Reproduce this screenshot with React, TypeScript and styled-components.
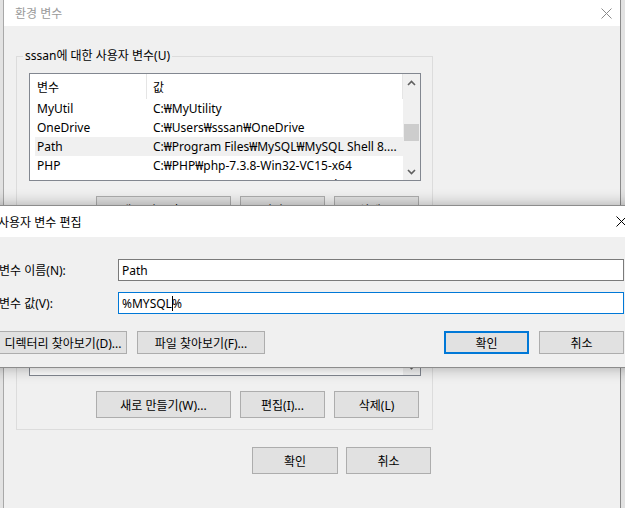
import styled, { createGlobalStyle } from 'styled-components';

const GlobalStyle = createGlobalStyle`
  html, body {
    margin: 0;
    padding: 0;
  }
  body {
    width: 625px;
    height: 508px;
    overflow: hidden;
    font-family: "Noto Sans", "Noto Sans CJK KR", sans-serif;
    font-size: 12px;
    color: #000;
  }
  * {
    box-sizing: border-box;
  }
`;

interface RowProps {
  $selected?: boolean;
}

interface WidthProps {
  $width: number;
}

const Desktop = styled.div`
  position: relative;
  width: 625px;
  height: 508px;
  overflow: hidden;
  background: #e2e2e2;
`;

const EnvWindow = styled.div`
  position: absolute;
  left: 3px;
  top: 0;
  width: 618px;
  height: 540px;
  display: flex;
  flex-direction: column;
  background: #f0f0f0;
  border-left: 1px solid #a8a8a8;
  border-right: 1px solid #8a8a8a;
`;

const EditDialog = styled.div`
  position: absolute;
  left: -14px;
  top: 205px;
  width: 650px;
  height: 163px;
  display: flex;
  flex-direction: column;
  background: #f0f0f0;
  border: 1px solid #8c8c8c;
  box-shadow: 0 0 14px rgba(0, 0, 0, 0.32);
`;

const TitleBar = styled.div<{ $height: number; $active?: boolean }>`
  height: ${({ $height }) => $height}px;
  flex: none;
  display: flex;
  align-items: center;
  justify-content: space-between;
  background: #fff;
  padding-left: 11px;
  color: ${({ $active }) => ($active ? '#000' : '#9a9a9a')};
  font-size: 12px;
`;

const CloseBox = styled.div`
  width: 28px;
  height: 100%;
  display: flex;
  align-items: center;
  justify-content: center;
`;

const EnvBody = styled.div`
  flex: 1;
  display: flex;
  flex-direction: column;
  padding: 22px 0 0 12px;
`;

const GroupBox = styled.fieldset<{ $top?: number }>`
  width: 417px;
  margin: ${({ $top }) => $top ?? 0}px 0 0 0;
  padding: 0 11px 11px 12px;
  border: 1px solid #dcdcdc;
  min-width: 0;
  display: flex;
  flex-direction: column;
`;

const Legend = styled.legend`
  padding: 0 2px;
  margin-left: -6px;
  line-height: 16px;
  font-size: 12px;
`;

const ListBox = styled.div<{ $height: number }>`
  margin-top: 9px;
  height: ${({ $height }) => $height}px;
  display: flex;
  background: #fff;
  border: 1px solid #828790;
`;

const ListContent = styled.div`
  flex: 1;
  overflow: hidden;
`;

const HeaderRow = styled.div`
  height: 25px;
  display: flex;
  align-items: stretch;
  border-right: 1px solid #e5e5e5;
`;

const HeaderCell = styled.div<WidthProps>`
  width: ${({ $width }) => $width}px;
  display: flex;
  align-items: center;
  padding-left: ${({ $width }) => ($width > 0 ? 7 : 6)}px;
  border-right: 1px solid #e5e5e5;
  &:last-child {
    flex: 1;
    border-right: none;
  }
`;

const Row = styled.div<RowProps>`
  height: 19px;
  margin-left: 5px;
  display: flex;
  align-items: center;
  white-space: nowrap;
  background: ${({ $selected }) => ($selected ? '#f0f0f0' : 'transparent')};
`;

const NameCell = styled.div`
  width: 112px;
  padding-left: 2px;
`;

const ValueCell = styled.div`
  flex: 1;
  padding-left: 6px;
  overflow: hidden;
`;

const ScrollBar = styled.div`
  width: 17px;
  flex: none;
  display: flex;
  flex-direction: column;
  background: #f0f0f0;
`;

const ScrollArrow = styled.div`
  height: 17px;
  display: flex;
  align-items: center;
  justify-content: center;
  color: #606060;
`;

const ScrollTrack = styled.div`
  flex: 1;
  display: flex;
  flex-direction: column;
  align-items: center;
`;

const ScrollThumb = styled.div<{ $offset: number }>`
  margin-top: ${({ $offset }) => $offset}px;
  width: 15px;
  height: 17px;
  background: #cdcdcd;
`;

const ButtonRow = styled.div<{ $top: number; $gap: number; $right?: number }>`
  display: flex;
  justify-content: flex-end;
  gap: ${({ $gap }) => $gap}px;
  margin-top: ${({ $top }) => $top}px;
  padding-right: ${({ $right }) => $right ?? 0}px;
`;

const EnvFooter = styled(ButtonRow)`
  width: 417px;
`;

const Button = styled.div<WidthProps & { $height: number; $default?: boolean }>`
  width: ${({ $width }) => $width}px;
  height: ${({ $height }) => $height}px;
  flex: none;
  display: flex;
  align-items: center;
  justify-content: center;
  white-space: nowrap;
  background: #e1e1e1;
  border: ${({ $default }) => ($default ? '2px solid #0078d7' : '1px solid #adadad')};
`;

const DialogBody = styled.div`
  flex: 1;
  display: flex;
  flex-direction: column;
  padding: 22px 11px 0 12px;
`;

const FieldRow = styled.div<{ $top: number }>`
  display: flex;
  align-items: center;
  margin-top: ${({ $top }) => $top}px;
`;

const FieldLabel = styled.div`
  width: 119px;
  flex: none;
  white-space: nowrap;
`;

const TextBox = styled.div<{ $focused?: boolean }>`
  flex: 1;
  height: 22px;
  display: flex;
  align-items: center;
  padding-left: 3px;
  background: #fff;
  border: 1px solid ${({ $focused }) => ($focused ? '#0078d7' : '#7a7a7a')};
  white-space: pre;
`;

const Caret = styled.span`
  display: inline-block;
  width: 1px;
  height: 15px;
  margin-right: -1px;
  background: #000;
`;

const DialogButtons = styled.div`
  display: flex;
  align-items: center;
  margin-top: 17px;
  gap: 10px;
`;

const Spacer = styled.div`
  flex: 1;
`;

const CloseIcon = ({ color }: { color: string }) => (
  <svg width="11" height="11" viewBox="0 0 11 11">
    <path d="M0.5 0.5 L10.5 10.5 M10.5 0.5 L0.5 10.5" stroke={color} strokeWidth="1" fill="none" />
  </svg>
);

const Chevron = ({ up }: { up?: boolean }) => (
  <svg width="9" height="6" viewBox="0 0 9 6">
    <path
      d={up ? 'M1 5 L4.5 1.5 L8 5' : 'M1 1 L4.5 4.5 L8 1'}
      stroke="#606060"
      strokeWidth="1.6"
      fill="none"
    />
  </svg>
);

const userVars = [
  { name: 'MyUtil', value: 'C:₩MyUtility' },
  { name: 'OneDrive', value: 'C:₩Users₩sssan₩OneDrive' },
  { name: 'Path', value: 'C:₩Program Files₩MySQL₩MySQL Shell 8....', selected: true },
  { name: 'PHP', value: 'C:₩PHP₩php-7.3.8-Win32-VC15-x64' },
  { name: 'TEMP', value: 'C:₩Users₩sssan₩AppData₩Local₩Temp' },
];

const systemVars = [
  { name: 'ComSpec', value: 'C:₩WINDOWS₩system32₩cmd.exe' },
  { name: 'DriverData', value: 'C:₩Windows₩System32₩Drivers₩DriverData' },
  { name: 'NUMBER_OF_PROCESSORS', value: '8' },
];

type VarItem = { name: string; value: string; selected?: boolean };

const VarList = ({ items, height, thumb }: { items: VarItem[]; height: number; thumb: number }) => (
  <ListBox $height={height}>
    <ListContent>
      <HeaderRow>
        <HeaderCell $width={117}>변수</HeaderCell>
        <HeaderCell $width={0}>값</HeaderCell>
      </HeaderRow>
      {items.map((v) => (
        <Row key={v.name} $selected={v.selected}>
          <NameCell>{v.name}</NameCell>
          <ValueCell>{v.value}</ValueCell>
        </Row>
      ))}
    </ListContent>
    <ScrollBar>
      <ScrollArrow>
        <Chevron up />
      </ScrollArrow>
      <ScrollTrack>
        <ScrollThumb $offset={thumb} />
      </ScrollTrack>
      <ScrollArrow>
        <Chevron />
      </ScrollArrow>
    </ScrollBar>
  </ListBox>
);

export default function App() {
  return (
    <>
      <GlobalStyle />
      <Desktop>
        <EnvWindow>
          <TitleBar $height={26}>
            <span>환경 변수</span>
            <CloseBox>
              <CloseIcon color="#8a8a8a" />
            </CloseBox>
          </TitleBar>
          <EnvBody>
            <GroupBox>
              <Legend>sssan에 대한 사용자 변수(U)</Legend>
              <VarList items={userVars} height={108} thumb={33} />
              <ButtonRow $top={15} $gap={9} $right={2}>
                <Button $width={135} $height={27}>새로 만들기(W)...</Button>
                <Button $width={85} $height={27}>편집(I)...</Button>
                <Button $width={85} $height={27}>삭제(L)</Button>
              </ButtonRow>
            </GroupBox>
            <GroupBox $top={10}>
              <Legend>시스템 변수(S)</Legend>
              <VarList items={systemVars} height={106} thumb={10} />
              <ButtonRow $top={15} $gap={9} $right={2}>
                <Button $width={135} $height={27}>새로 만들기(W)...</Button>
                <Button $width={85} $height={27}>편집(I)...</Button>
                <Button $width={85} $height={27}>삭제(L)</Button>
              </ButtonRow>
            </GroupBox>
            <EnvFooter $top={17} $gap={8} $right={2}>
              <Button $width={86} $height={27}>확인</Button>
              <Button $width={85} $height={27}>취소</Button>
            </EnvFooter>
          </EnvBody>
        </EnvWindow>

        <EditDialog>
          <TitleBar $height={31} $active>
            <span>사용자 변수 편집</span>
            <CloseBox>
              <CloseIcon color="#000" />
            </CloseBox>
          </TitleBar>
          <DialogBody>
            <FieldRow $top={0}>
              <FieldLabel>변수 이름(N):</FieldLabel>
              <TextBox>Path</TextBox>
            </FieldRow>
            <FieldRow $top={11}>
              <FieldLabel>변수 값(V):</FieldLabel>
              <TextBox $focused>
                %MYSQL<Caret />%
              </TextBox>
            </FieldRow>
            <DialogButtons>
              <Button $width={128} $height={23}>디렉터리 찾아보기(D)...</Button>
              <Button $width={128} $height={23}>파일 찾아보기(F)...</Button>
              <Spacer />
              <Button $width={85} $height={23} $default>확인</Button>
              <Button $width={85} $height={23}>취소</Button>
            </DialogButtons>
          </DialogBody>
        </EditDialog>
      </Desktop>
    </>
  );
}
